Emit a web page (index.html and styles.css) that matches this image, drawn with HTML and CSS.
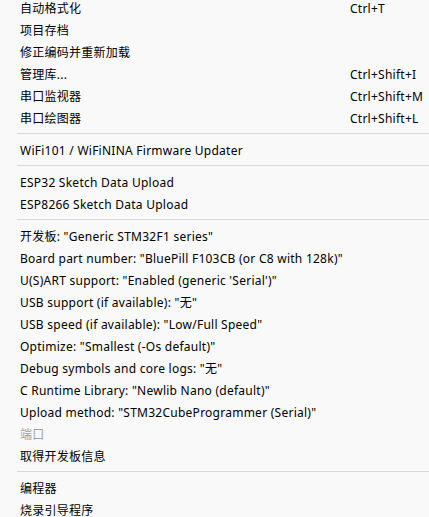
FILE: index.html
```html
<!DOCTYPE html>
<html>
<head>
<meta charset="utf-8">
<link rel="stylesheet" href="styles.css">
</head>
<body>
<div class="menu">
  <div class="item"><span class="label">自动格式化</span><span class="key">Ctrl+T</span></div>
  <div class="item"><span class="label">项目存档</span></div>
  <div class="item"><span class="label">修正编码并重新加载</span></div>
  <div class="item"><span class="label">管理库...</span><span class="key">Ctrl+Shift+I</span></div>
  <div class="item"><span class="label">串口监视器</span><span class="key">Ctrl+Shift+M</span></div>
  <div class="item"><span class="label">串口绘图器</span><span class="key">Ctrl+Shift+L</span></div>
  <div class="sep"></div>
  <div class="item"><span class="label">WiFi101 / WiFiNINA Firmware Updater</span></div>
  <div class="sep"></div>
  <div class="item"><span class="label">ESP32 Sketch Data Upload</span></div>
  <div class="item"><span class="label">ESP8266 Sketch Data Upload</span></div>
  <div class="sep"></div>
  <div class="item"><span class="label">开发板: "Generic STM32F1 series"</span></div>
  <div class="item"><span class="label">Board part number: "BluePill F103CB (or C8 with 128k)"</span></div>
  <div class="item"><span class="label">U(S)ART support: "Enabled (generic 'Serial')"</span></div>
  <div class="item"><span class="label">USB support (if available): "无"</span></div>
  <div class="item"><span class="label">USB speed (if available): "Low/Full Speed"</span></div>
  <div class="item"><span class="label">Optimize: "Smallest (-Os default)"</span></div>
  <div class="item"><span class="label">Debug symbols and core logs: "无"</span></div>
  <div class="item"><span class="label">C Runtime Library: "Newlib Nano (default)"</span></div>
  <div class="item"><span class="label">Upload method: "STM32CubeProgrammer (Serial)"</span></div>
  <div class="item disabled"><span class="label">端口</span></div>
  <div class="item"><span class="label">取得开发板信息</span></div>
  <div class="sep"></div>
  <div class="item"><span class="label">编程器</span></div>
  <div class="item"><span class="label">烧录引导程序</span></div>
</div>
</body>
</html>
```
FILE: styles.css
```css
html, body {
  margin: 0;
  padding: 0;
  background: #f9f9f9;
  overflow: hidden;
}
.menu {
  margin-top: -3px;
  display: flex;
  flex-direction: column;
  font-family: "Noto Sans", "Noto Sans CJK SC", sans-serif;
  font-size: 12px;
  letter-spacing: 0.25px;
  color: #000;
}
.item {
  height: 22px;
  display: flex;
  align-items: center;
  padding-left: 20px;
  white-space: nowrap;
}
.label {
  flex: 1;
}
.key {
  width: 79px;
}
.disabled {
  color: #a0a0a0;
}
.sep {
  height: 1px;
  background: #d8d8d8;
  margin: 4px 0 5px 17px;
}
```
